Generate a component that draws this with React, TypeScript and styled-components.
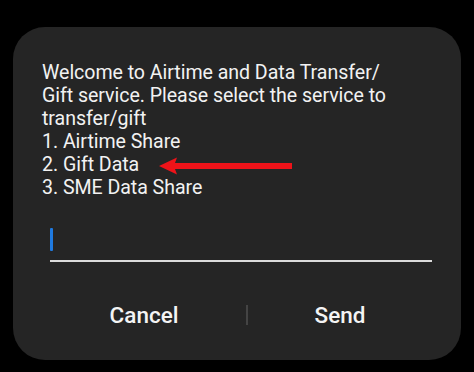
import React from "react";
import styled, { createGlobalStyle } from "styled-components";

const GlobalStyle = createGlobalStyle`
  html, body {
    margin: 0;
    padding: 0;
    background: #000;
  }
  body {
    font-family: Roboto, "Noto Sans", sans-serif;
    -webkit-font-smoothing: antialiased;
  }
`;

const StyledPage = styled.div`
  width: 474px;
  height: 372px;
  background: #000;
  padding: 27px 13px 0 13px;
  box-sizing: border-box;
`;

const StyledDialog = styled.div`
  background: #252525;
  border-radius: 32px;
  height: 333px;
  padding: 34px 29px 0 29px;
  box-sizing: border-box;
  display: flex;
  flex-direction: column;
`;

const StyledMessage = styled.div`
  color: #f2f2f2;
  font-size: 19.6px;
  line-height: 23px;
  letter-spacing: -0.05px;
`;

const StyledLine = styled.div`
  display: flex;
  align-items: center;
`;

const StyledArrow = styled.svg`
  margin-left: 20px;
  margin-top: 2px;
`;

const StyledInput = styled.div`
  margin: 29px 0 0 8px;
  width: 382px;
  height: 32px;
  border-bottom: 2px solid #dcdcdc;
  position: relative;
`;

const StyledCursor = styled.span`
  position: absolute;
  left: 0;
  top: 0;
  width: 3px;
  height: 23px;
  background: #1f7ae0;
  border-radius: 1px;
`;

const StyledActions = styled.div`
  display: grid;
  grid-template-columns: 204px 2px 1fr;
  align-items: center;
  margin-top: 40px;
`;

const StyledButton = styled.div`
  text-align: center;
  color: #f4f4f4;
  font-size: 22.5px;
  font-weight: 500;
`;

const StyledDivider = styled.div`
  width: 2px;
  height: 20px;
  background: #444;
`;

export default function App() {
  return (
    <>
      <GlobalStyle />
      <StyledPage>
        <StyledDialog>
          <StyledMessage>
            <div>Welcome to Airtime and Data Transfer/</div>
            <div>Gift service. Please select the service to</div>
            <div>transfer/gift</div>
            <div>1. Airtime Share</div>
            <StyledLine>
              2. Gift Data
              <StyledArrow width="133" height="18" viewBox="0 0 133 18">
                <polygon points="0,9 18,0.5 16,6 133,6 133,12 16,12 18,17.5" fill="#ee1319" />
              </StyledArrow>
            </StyledLine>
            <div>3. SME Data Share</div>
          </StyledMessage>
          <StyledInput>
            <StyledCursor />
          </StyledInput>
          <StyledActions>
            <StyledButton>Cancel</StyledButton>
            <StyledDivider />
            <StyledButton>Send</StyledButton>
          </StyledActions>
        </StyledDialog>
      </StyledPage>
    </>
  );
}
